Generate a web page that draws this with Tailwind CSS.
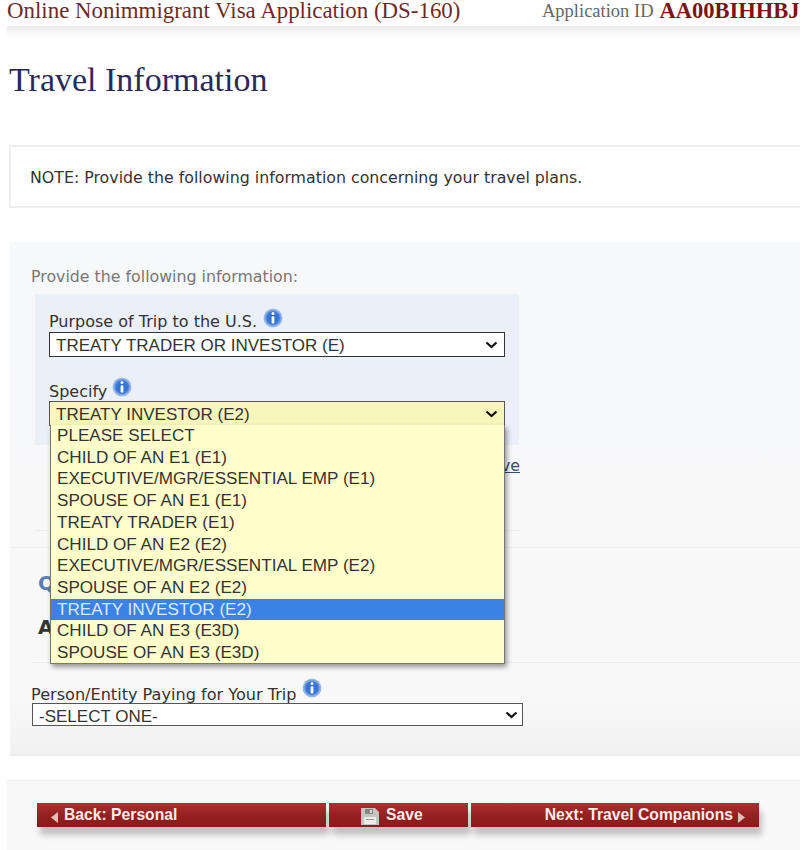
<!DOCTYPE html>
<html lang="en">
<head>
<meta charset="utf-8">
<title>Travel Information</title>
<script src="https://cdn.jsdelivr.net/npm/@tailwindcss/browser@4"></script>
</head>
<body class="bg-white">
<svg width="0" height="0" class="absolute">
  <defs>
    <radialGradient id="ib" cx="50%" cy="50%" r="50%">
      <stop offset="0%" stop-color="#2a6bd4"/>
      <stop offset="65%" stop-color="#3c7ad8"/>
      <stop offset="85%" stop-color="#8fb2e6"/>
      <stop offset="100%" stop-color="#a9bfe2"/>
    </radialGradient>
  </defs>
</svg>
<div class="relative w-[800px] h-[850px] overflow-hidden font-['DejaVu_Sans',sans-serif] text-[#333]">

  <header class="h-[26px] flex items-start pl-[7px] font-['Liberation_Serif',serif] whitespace-nowrap leading-[21px]">
    <span class="w-[535px] text-[22.9px] text-[#6e2a2a]">Online Nonimmigrant Visa Application (DS-160)</span>
    <span class="text-[18.5px] text-[#666] mr-[6px] leading-[23px]">Application ID</span>
    <span class="text-[22.5px] font-bold text-[#7a1414] leading-[22px]">AA00BIHHBJ</span>
  </header>
  <div class="h-[12px] ml-[7px] bg-gradient-to-b from-[#ececec] to-white"></div>

  <h1 class="mt-[25px] ml-[9px] h-[34px] leading-[34px] font-['Liberation_Serif',serif] text-[34px] text-[#2a2a58]">Travel Information</h1>

  <section class="mt-[48px] ml-[9px] h-[63px] border-2 border-r-0 border-[#eeeeee] flex items-center pl-[19px] pt-[2px] text-[15.8px] text-[#333] whitespace-nowrap">
    NOTE: Provide the following information concerning your travel plans.
  </section>

  <main class="relative mt-[34px] ml-[10px] h-[514px] bg-gradient-to-b from-[#f7f8fa] via-[#f8f8f8] via-90% to-[#f1f1f1] border-b-2 border-[#ececec] pt-[26px]">
    <p class="ml-[21px] h-[18px] leading-[18px] text-[15.8px] text-[#777] whitespace-nowrap">Provide the following information:</p>

    <div class="ml-[25px] mt-[8px] w-[484px] h-[151px] bg-[#ebeff7] pt-[12px] pl-[14px]">
      <div class="h-[26px] flex items-end">
        <label class="text-[16px] leading-[20px] text-[#333] whitespace-nowrap">Purpose of Trip to the U.S.</label>
        <svg class="ml-[6px] mb-[4px]" width="20" height="20" viewBox="0 0 20 20"><circle cx="10" cy="10" r="9.5" fill="url(#ib)"/><circle cx="10" cy="5.6" r="1.5" fill="#fff"/><rect x="8.6" y="8.2" width="2.8" height="7.4" rx="1" fill="#fff"/></svg>
      </div>
      <div class="relative w-[456px] h-[25px]">
        <select class="appearance-none block w-full h-full border border-[#333] bg-white pl-[6px] pb-[2px] font-['Liberation_Sans',sans-serif] text-[17px] text-[#333]"><option>TREATY TRADER OR INVESTOR (E)</option></select>
        <svg class="absolute right-[7px] top-[9px] pointer-events-none" width="13" height="8" viewBox="0 0 13 8"><path d="M1.5 1.5 L6.5 6 L11.5 1.5" fill="none" stroke="#111" stroke-width="2.2"/></svg>
      </div>
      <div class="h-[44px] flex items-end">
        <label class="text-[16px] leading-[18px] text-[#333]">Specify</label>
        <svg class="ml-[5px] mb-[4px]" width="20" height="20" viewBox="0 0 20 20"><circle cx="10" cy="10" r="9.5" fill="url(#ib)"/><circle cx="10" cy="5.6" r="1.5" fill="#fff"/><rect x="8.6" y="8.2" width="2.8" height="7.4" rx="1" fill="#fff"/></svg>
      </div>
      <div class="relative w-[456px] h-[25px]">
        <select class="appearance-none block w-full h-full border border-[#555] bg-[#f9f6bc] pl-[6px] pb-[2px] font-['Liberation_Sans',sans-serif] text-[17px] text-[#333]"><option>TREATY INVESTOR (E2)</option></select>
        <svg class="absolute right-[7px] top-[9px] pointer-events-none" width="13" height="8" viewBox="0 0 13 8"><path d="M1.5 1.5 L6.5 6 L11.5 1.5" fill="none" stroke="#111" stroke-width="2.2"/></svg>
      </div>
    </div>

    <div class="ml-[25px] w-[485px] h-[86px] pt-[9px] text-right border-b border-[#eeeeee]">
      <a class="text-[15.8px] leading-[20px] text-[#3a4a6a] underline">ve</a>
    </div>

    <div class="mt-[16px] border-t border-[#ececec] pl-[28px] h-[115px]">
      <div class="pt-[23px] h-[44px] text-[20px] leading-[24px] font-bold text-[#5b7fb5]">Q</div>
      <div class="pt-[23px] h-[44px] text-[20px] leading-[24px] font-bold text-[#333]">A</div>
    </div>

    <div class="ml-[21px] border-t border-[#eeeeee] pr-[21px]">
      <div class="h-[40px] flex items-end">
        <label class="text-[16.1px] leading-[16px] text-[#333] whitespace-nowrap">Person/Entity Paying for Your Trip</label>
        <svg class="ml-[6px] mb-[5px]" width="20" height="20" viewBox="0 0 20 20"><circle cx="10" cy="10" r="9.5" fill="url(#ib)"/><circle cx="10" cy="5.6" r="1.5" fill="#fff"/><rect x="8.6" y="8.2" width="2.8" height="7.4" rx="1" fill="#fff"/></svg>
      </div>
      <div class="relative ml-[1px] w-[491px] h-[23px]">
        <select class="appearance-none block w-full h-full border border-[#555] bg-white pl-[6px] pb-[2px] font-['Liberation_Sans',sans-serif] text-[17px] text-[#333]"><option>-SELECT ONE-</option></select>
        <svg class="absolute right-[5px] top-[8px] pointer-events-none" width="13" height="8" viewBox="0 0 13 8"><path d="M1.5 1.5 L6.5 6 L11.5 1.5" fill="none" stroke="#111" stroke-width="2.2"/></svg>
      </div>
    </div>

    <ul class="absolute left-[40px] top-[183px] w-[455px] h-[239px] bg-[#ffffcc] border border-t-0 border-[#777] shadow-[2px_3px_5px_rgba(0,0,0,0.4)] font-['Liberation_Sans',sans-serif] text-[17.1px] leading-[21.7px] text-[#333] whitespace-nowrap">
      <li class="pl-[6px]">PLEASE SELECT</li>
      <li class="pl-[6px]">CHILD OF AN E1 (E1)</li>
      <li class="pl-[6px]">EXECUTIVE/MGR/ESSENTIAL EMP (E1)</li>
      <li class="pl-[6px]">SPOUSE OF AN E1 (E1)</li>
      <li class="pl-[6px]">TREATY TRADER (E1)</li>
      <li class="pl-[6px]">CHILD OF AN E2 (E2)</li>
      <li class="pl-[6px]">EXECUTIVE/MGR/ESSENTIAL EMP (E2)</li>
      <li class="pl-[6px]">SPOUSE OF AN E2 (E2)</li>
      <li class="pl-[6px] bg-[#3b82e6] text-[#dce9fb]">TREATY INVESTOR (E2)</li>
      <li class="pl-[6px]">CHILD OF AN E3 (E3D)</li>
      <li class="pl-[6px]">SPOUSE OF AN E3 (E3D)</li>
    </ul>
  </main>

  <footer class="mt-[24px] ml-[7px] h-[70px] bg-[#f8f8f8] border-t border-[#efefef] pt-[22px] pl-[30px]">
    <nav class="flex gap-[3px] font-['Liberation_Sans',sans-serif] text-[15.7px] font-bold text-[#f8ecec] h-[24px] whitespace-nowrap">
      <a class="w-[289px] h-[24px] flex items-center pl-[14px] bg-gradient-to-b from-[#b03030] via-[#952020] to-[#8a1a1a] shadow-[3px_8px_6px_rgba(0,0,0,0.22)]">
        <svg class="mr-[6px] mt-[4px]" width="7" height="11" viewBox="0 0 7 11"><path d="M7 0 L0 5.5 L7 11 Z" fill="#d9c2b8"/></svg>Back: Personal
      </a>
      <a class="w-[139px] h-[24px] flex items-center pl-[32px] bg-gradient-to-b from-[#b03030] via-[#952020] to-[#8a1a1a] shadow-[3px_8px_6px_rgba(0,0,0,0.22)]">
        <svg class="mr-[7px] mt-[3px]" width="18" height="17" viewBox="0 0 18 17"><path d="M0 0 H14 L18 4 V17 H0 Z" fill="#c9c4c4"/><rect x="4" y="1" width="8" height="5" fill="#8a8585"/><rect x="9" y="2" width="2" height="3" fill="#d8d4d4"/><rect x="3" y="9" width="12" height="7" fill="#efecec"/><rect x="5" y="11" width="8" height="1" fill="#999"/></svg>Save
      </a>
      <a class="w-[288px] h-[24px] flex items-center justify-end pr-[14px] bg-gradient-to-b from-[#b03030] via-[#952020] to-[#8a1a1a] shadow-[3px_8px_6px_rgba(0,0,0,0.22)]">
        Next: Travel Companions<svg class="ml-[5px] mt-[4px]" width="7" height="11" viewBox="0 0 7 11"><path d="M0 0 L7 5.5 L0 11 Z" fill="#d9c2b8"/></svg>
      </a>
    </nav>
  </footer>
</div>
</body>
</html>
